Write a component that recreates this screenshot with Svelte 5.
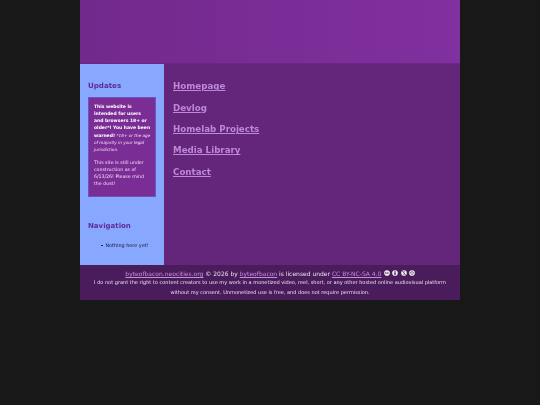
<script>
  const links = ['Homepage', 'Devlog', 'Homelab Projects', 'Media Library', 'Contact'];
</script>

<div class="page">
  <header class="banner"></header>
  <div class="middle">
    <aside class="side">
      <h2>Updates</h2>
      <div class="notice">
        <p class="first"><b>This website is intended for users and browsers 18+ or older*! You have been warned!</b> <i>*18+ or the age of majority in your legal jurisdiction.</i></p>
        <p>This site is still under construction as of 6/13/26! Please mind the dust!</p>
      </div>
      <h2 class="nav-title">Navigation</h2>
      <ul><li>Nothing here yet!</li></ul>
    </aside>
    <main class="content">
      {#each links as l}
        <a href="#top">{l}</a>
      {/each}
    </main>
  </div>
  <footer>
    <div class="l1">
      <a href="#top">byteofbacon.neocities.org</a> © 2026 by <a href="#top">byteofbacon</a> is licensed under <a href="#top">CC BY-NC-SA 4.0</a>
      <span class="cc">
        <svg viewBox="0 0 10 10" width="6" height="6"><circle cx="5" cy="5" r="4.7" fill="#f4f0f6" /><path d="M4.4 4a1.3 1.3 0 1 0 0 2M7.4 4a1.3 1.3 0 1 0 0 2" fill="none" stroke="#222" stroke-width="1" /></svg>
        <svg viewBox="0 0 10 10" width="6" height="6"><circle cx="5" cy="5" r="4.7" fill="#f4f0f6" /><circle cx="5" cy="2.6" r="1" fill="#222" /><rect x="3.8" y="4" width="2.4" height="4" fill="#222" /></svg>
        <svg viewBox="0 0 10 10" width="6" height="6"><circle cx="5" cy="5" r="4.7" fill="#f4f0f6" /><path d="M6.7 3.8a2 2 0 0 0-3.4 0M3.3 6.2a2 2 0 0 0 3.4 0M2 2l6 6" fill="none" stroke="#222" stroke-width="1" /></svg>
        <svg viewBox="0 0 10 10" width="6" height="6"><circle cx="5" cy="5" r="4.7" fill="#f4f0f6" /><path d="M2.8 5a2.2 2.2 0 1 1 .8 1.7" fill="none" stroke="#222" stroke-width="1" /><path d="M1.6 4.6h2.4L2.8 6z" fill="#222" /></svg>
      </span>
    </div>
    <div class="l2">I do not grant the right to content creators to use my work in a monetized video, reel, short, or any other hosted online audiovisual platform</div>
    <div class="l2">without my consent. Unmonetized use is free, and does not require permission.</div>
  </footer>
</div>

<style>
  :global(body) { margin: 0; background: #181818; }
  .page {
    width: 380px;
    margin: 0 auto;
    font-family: "DejaVu Sans", "Open Sans", sans-serif;
    filter: blur(0.3px);
  }
  .banner { height: 63px; background: linear-gradient(90deg, #72298c, #81309f); }
  .middle { display: flex; height: 202px; border-top: 1px solid #6b2883; box-sizing: border-box; }
  .side {
    width: 84px;
    background: #88a8ff;
    padding: 17px 8px 0;
    box-sizing: border-box;
    color: #16163a;
  }
  h2 { margin: 0; font-size: 7.1px; line-height: 9px; font-weight: 700; color: #5d2a96; }
  .nav-title { margin-top: 25px; font-size: 7px; }
  .notice {
    margin-top: 7px;
    height: 100px;
    box-sizing: border-box;
    background: #7b2d96;
    border: 1px solid #6a55c0;
    padding: 5px 4px 5px 5px;
    color: #f0dcf6;
    font-size: 4.7px;
    line-height: 7.15px;
  }
  .notice p { margin: 0; }
  .notice .first { margin-bottom: 5.5px; }
  .notice b { color: #fff; font-weight: 600; font-size: 4.5px; }
  .notice i { font-size: 4.2px; }
  ul { margin: 11px 0 0; padding: 0 0 0 13px; font-size: 4.9px; line-height: 7px; list-style: none; }
  li { display: flex; align-items: center; gap: 2.6px; }
  li::before { content: ""; width: 1.8px; height: 1.8px; border-radius: 50%; background: #16163a; }
  .content {
    flex: 1;
    background: #64267a;
    padding: 15.3px 9px;
    display: flex;
    flex-direction: column;
    align-items: flex-start;
    gap: 7.4px;
  }
  .content a { color: #bd88d6; font-size: 8.7px; line-height: 14px; font-weight: 700; }
  footer {
    height: 35px;
    background: #4a1c5c;
    color: #ecdff2;
    text-align: center;
    font-size: 5px;
    line-height: 9.4px;
    padding-top: 4px;
    box-sizing: border-box;
  }
  .l1 { font-size: 6px; }
  footer a { color: #c48fdc; }
  .cc { display: inline-flex; gap: 2.1px; vertical-align: 0; margin-left: 1px; }
</style>
